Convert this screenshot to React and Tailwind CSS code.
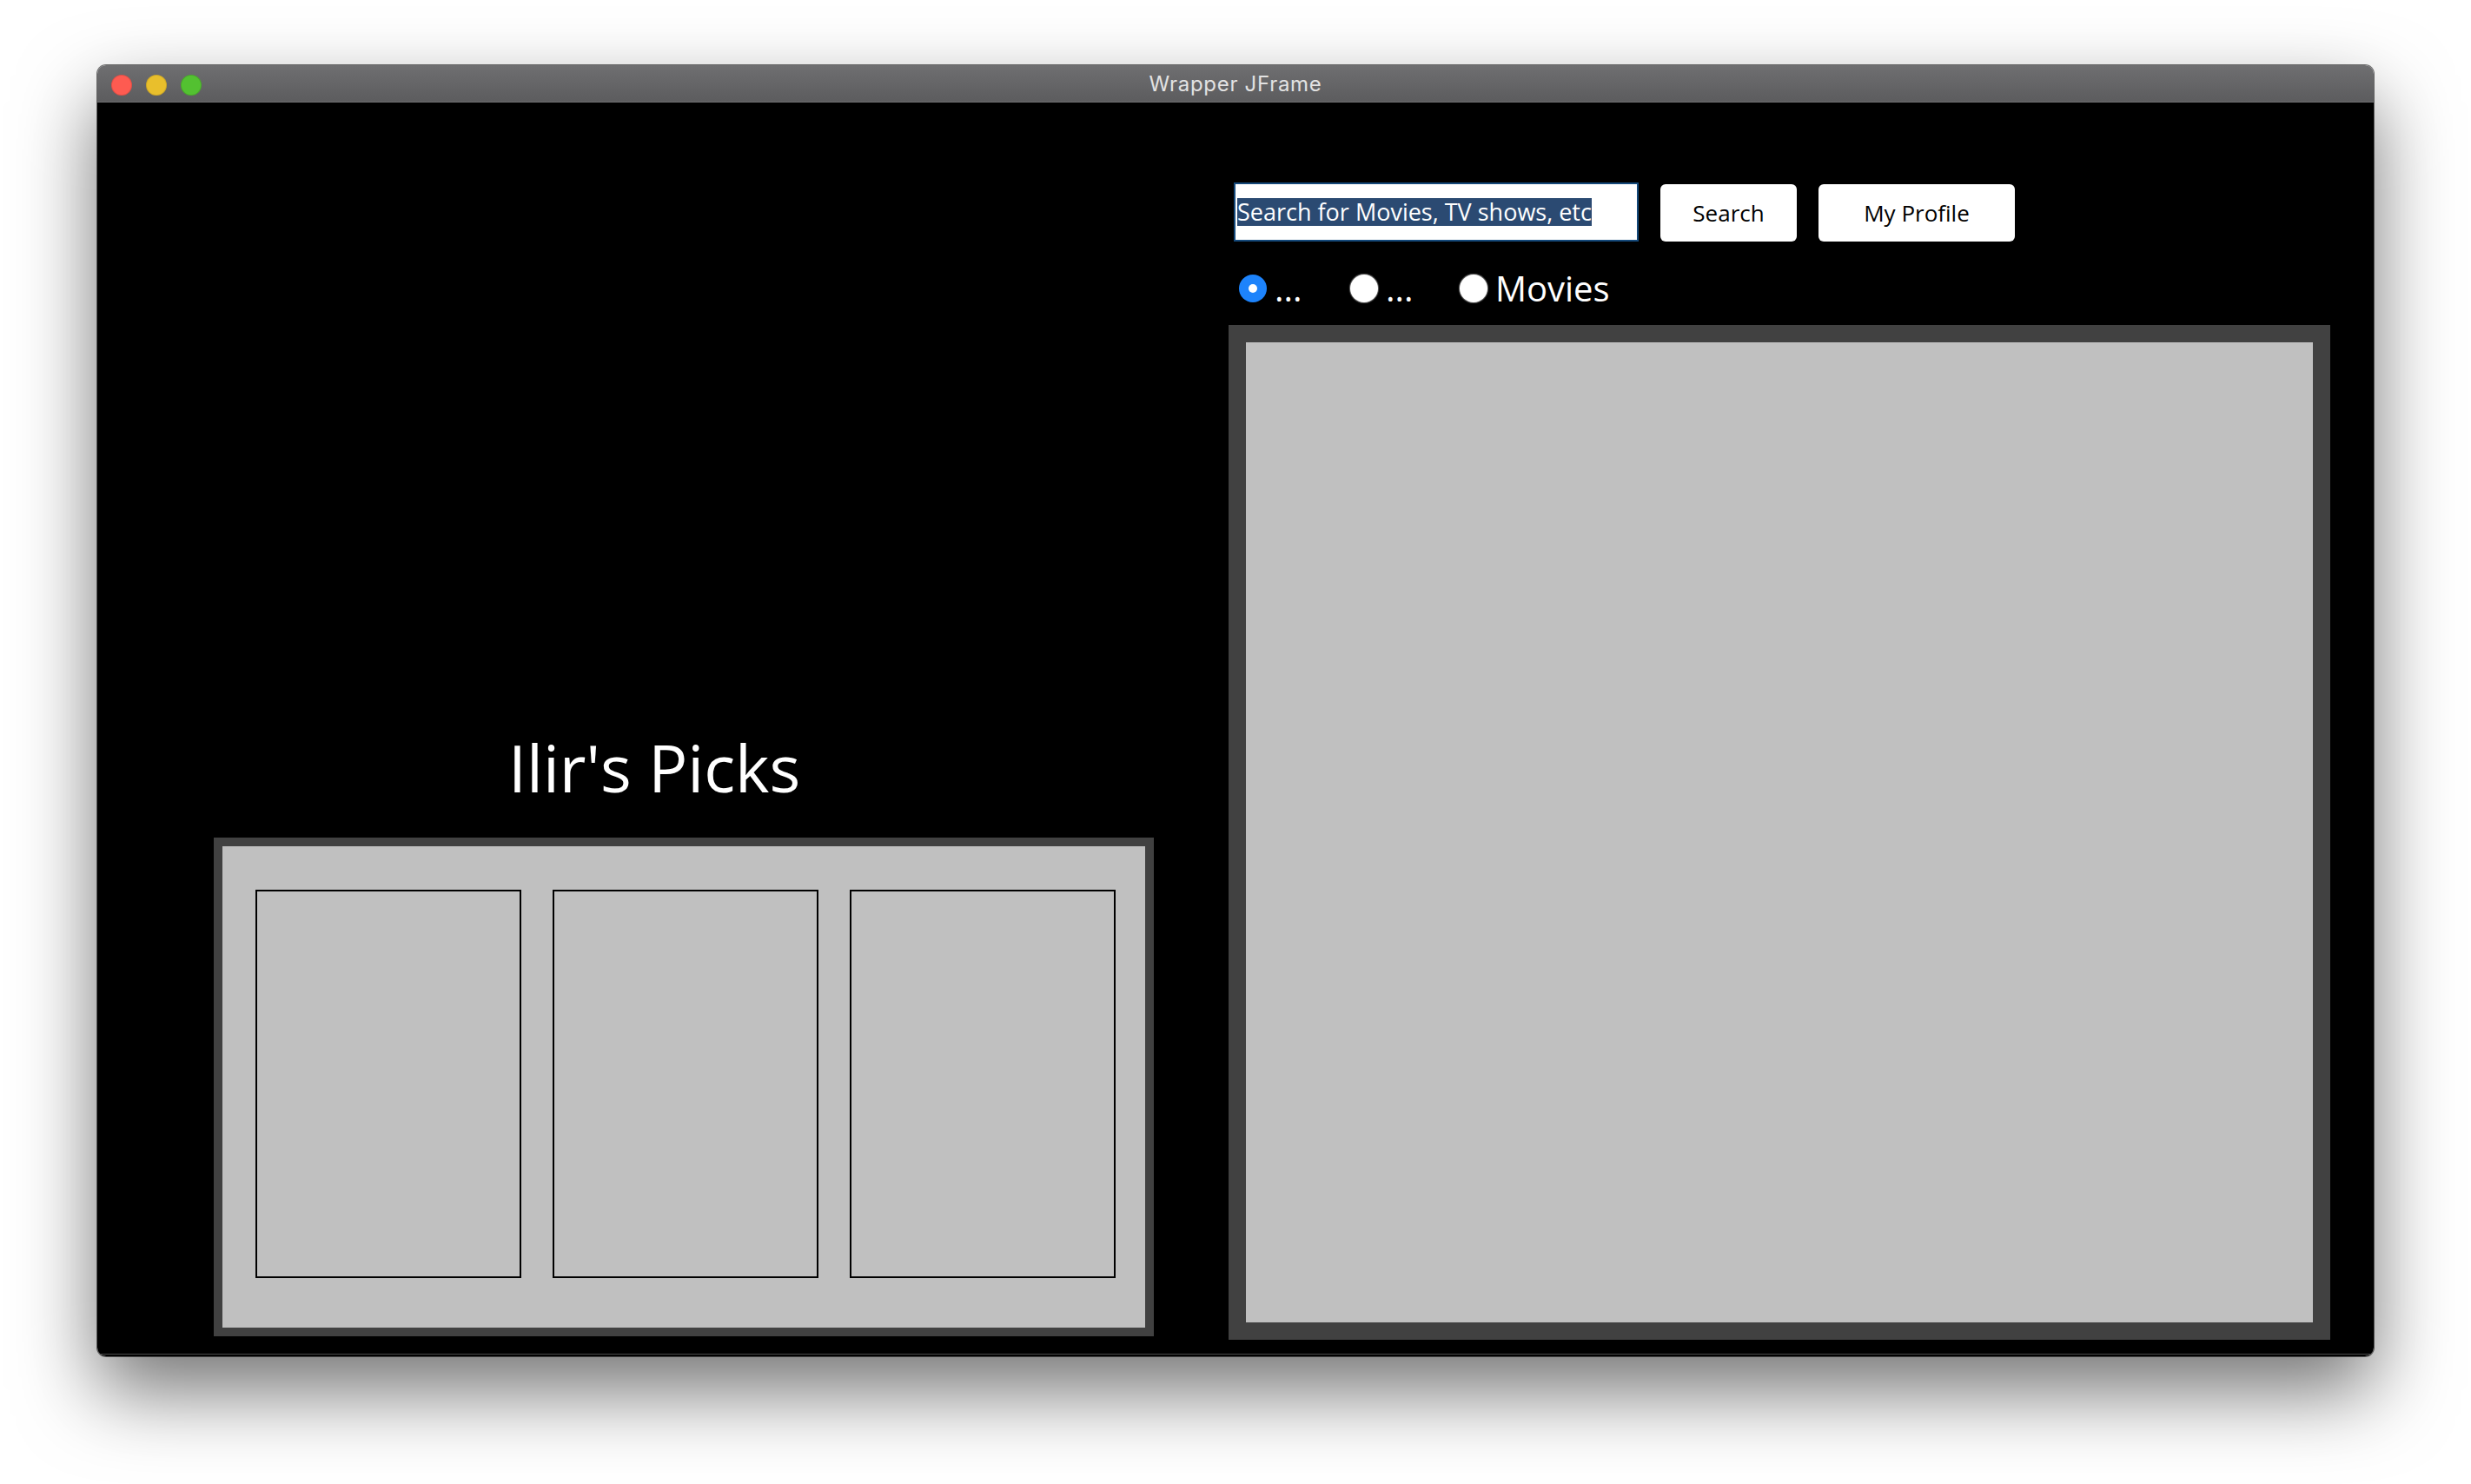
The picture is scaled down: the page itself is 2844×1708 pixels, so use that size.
import React from 'react';

const font = "font-['Open_Sans',sans-serif]";

function TitleBar() {
  return (
    <div className="grid h-[43px] grid-cols-[1fr_auto_1fr] items-center bg-gradient-to-b from-[#6f6f71] to-[#5c5c5e] border-b border-[#707072]">
      <div className="flex items-center gap-[16px] pl-[16px] pt-[3px]">
        <span className="h-[24px] w-[24px] rounded-full bg-[#fe5b51] shadow-[inset_0_0_0_1px_rgba(0,0,0,0.12)]" />
        <span className="h-[24px] w-[24px] rounded-full bg-[#e9bf2c] shadow-[inset_0_0_0_1px_rgba(0,0,0,0.12)]" />
        <span className="h-[24px] w-[24px] rounded-full bg-[#53c131] shadow-[inset_0_0_0_1px_rgba(0,0,0,0.12)]" />
      </div>
      <div className="pt-[2px] font-['Inter',sans-serif] text-[24px] tracking-[0.7px] text-[#e2e2e2]">
        Wrapper JFrame
      </div>
      <div />
    </div>
  );
}

function Radio({ checked, label, className }) {
  return (
    <label className={`flex items-center ${className}`}>
      {checked ? (
        <span className="flex h-[32px] w-[32px] items-center justify-center rounded-full bg-[#1d83fb]">
          <span className="h-[10px] w-[10px] rounded-full bg-white" />
        </span>
      ) : (
        <span className="h-[32px] w-[32px] rounded-full bg-white shadow-[0_0_1px_1px_rgba(255,255,255,0.4)]" />
      )}
      <span className="ml-[9px] text-[40px] leading-none text-white">{label}</span>
    </label>
  );
}

function PickCard() {
  return <div className="h-[447px] w-[306px] border-2 border-black bg-[#c0c0c0]" />;
}

export default function App() {
  return (
    <div className={`min-h-screen bg-white px-[112px] pt-[75px] ${font}`}>
      <div className="w-[2620px] overflow-hidden rounded-[10px] shadow-[0_0_0_1px_rgba(0,0,0,0.55),0_40px_90px_rgba(0,0,0,0.55)]">
        <TitleBar />

        <div className="flex h-[1440px] bg-black pl-[134px]">
          {/* Left column: picks */}
          <div className="flex w-[1082px] flex-col justify-end pb-[20px]">
            <h1 className="mb-[43px] ml-[339px] text-[75px] leading-none font-normal text-white">
              Ilir's Picks
            </h1>
            <div className="h-[574px] bg-[#414141] p-[10px]">
              <div className="flex h-full gap-[36px] bg-[#c0c0c0] pl-[38px] pt-[50px]">
                <PickCard />
                <PickCard />
                <PickCard />
              </div>
            </div>
          </div>

          {/* Right column: search */}
          <div className="ml-[86px] flex w-[1268px] flex-col pt-[92px]">
            <div className="ml-[6px] flex h-[68px] items-end gap-[25px]">
              <div className="flex h-[68px] w-[466px] items-center border-2 border-[#15497a] bg-white pl-[2px]">
                <span className="bg-[#2b4a72] text-[27px] leading-[32px] text-white">
                  Search for Movies, TV shows, etc
                </span>
              </div>
              <button className="flex h-[66px] w-[157px] items-center justify-center rounded-[6px] bg-white text-[26px] text-black">
                Search
              </button>
              <button className="flex h-[66px] w-[226px] items-center justify-center rounded-[6px] bg-white text-[26px] text-black">
                My Profile
              </button>
            </div>

            <div className="ml-[12px] mt-[34px] flex h-[40px] items-center">
              <Radio checked label="..." className="w-[128px]" />
              <Radio label="..." className="w-[126px]" />
              <Radio label="Movies" />
            </div>

            <div className="mt-[22px] h-[1168px] bg-[#414141] p-[20px]">
              <div className="h-full bg-[#c0c0c0]" />
            </div>
          </div>
        </div>
        <div className="h-[3px] border-t border-[#4a4a4a] bg-black" />
      </div>
    </div>
  );
}
